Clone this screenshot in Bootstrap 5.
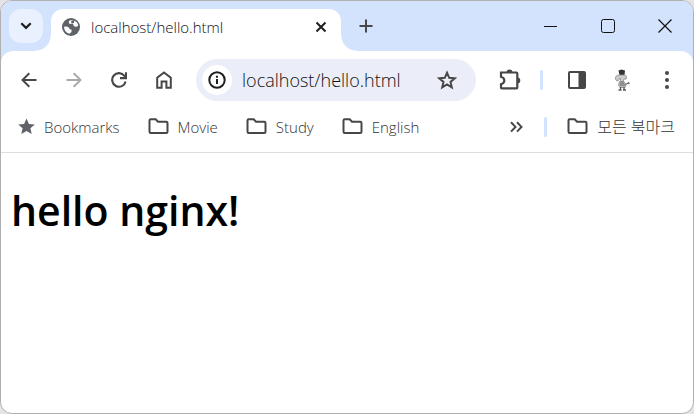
<!DOCTYPE html>
<html lang="ko">
<head>
<meta charset="utf-8">
<meta name="viewport" content="width=device-width, initial-scale=1">
<title>localhost/hello.html</title>
<link href="https://cdn.jsdelivr.net/npm/bootstrap@5.3.0/dist/css/bootstrap.min.css" rel="stylesheet">
<style>
body{background:#e4e4e4;font-family:"Open Sans","Noto Sans CJK KR",sans-serif;font-size:15px;font-weight:300;color:#111;line-height:20px}
svg{display:block;flex:none}
button{font-weight:inherit;color:#474747}
.window{border:1px solid #b0b0b0;border-radius:12px;overflow:hidden;background:#fff}
.strip{background:#d3e2fd;height:50px;padding-left:8px}
.tab-search{width:34px;height:34px;border-radius:12px;background:#e9f1fe;margin:8px 8px 0 0;color:#1f1f1f}
.page-tab{position:relative;width:290px;height:42px;margin-top:8px;padding:0 12px 6px 10px;background:#fff;border-radius:12px 12px 0 0}
.page-tab::before,.page-tab::after{content:"";position:absolute;bottom:0;width:15px;height:15px}
.page-tab::before{right:100%;background:radial-gradient(circle at 0 0,transparent 14px,#fff 15px)}
.page-tab::after{left:100%;background:radial-gradient(circle at 100% 0,transparent 14px,#fff 15px)}
.tab-title{margin-left:10px}
.tab-close{width:16px;height:20px;color:#1f1f1f}
.bare{border:0;background:none;padding:0;display:flex;flex:none;align-items:center;justify-content:center}
.bare.tab-search{background:#e9f1fe}
.bare.site-info{background:#fff}
.new-tab{width:50px;height:50px}
.win-btn{width:57px;height:50px;color:#111}
.chrome-wrap{background:#d3e2fd}
.toolbar{background:#fff;border-radius:12px 12px 0 0;padding:8px 4px 0 5px}
.tool{width:45px;height:42px}
.tool:disabled{color:#a9a9a9}
.address{min-width:0;height:42px;border-radius:21px;background:#ebeef8;margin:0 11px 0 10px;padding:0 7px 0 6px}
.site-info{width:30px;height:30px;border-radius:50%;color:#1f1f1f}
.url{min-width:0;width:0;border:0;background:none;padding:0;margin-left:10px;font-size:18px;font-weight:300;color:#111;outline:0}
.rule{width:3px;height:20px;border-radius:2px;background:#d3e2fd;flex:none}
.rule-tools{margin:0 11px 0 8px}
.rule-marks{margin:0 20px 0 21px}
.marks{height:52px;padding:0 18px 0 17px;border-bottom:1px solid #dedede}
.mark-list{gap:28px}
.marks a{color:#333;text-decoration:none;display:flex;align-items:center;gap:9px;white-space:nowrap}
.page{min-height:260px;padding:32px 10px}
.page h1{font-size:41px;line-height:50px;font-weight:600;color:#000;margin:0}
</style>
<script src="https://cdn.jsdelivr.net/npm/bootstrap@5.3.0/dist/js/bootstrap.bundle.min.js"></script>
</head>
<body>
<svg class="d-none" aria-hidden="true">
<symbol id="folder" viewBox="0 0 21 17"><path d="M1.500 13.500V2.500q0-1.200 1.200-1.200h5l2.300 2.400h8.300q1.200 0 1.200 1.200v8.800q0 1.300-1.200 1.300H2.700q-1.200 0-1.200-1.500z" fill="none" stroke="#474747" stroke-width="2"/></symbol>
</svg>
<div class="window min-vh-100 d-flex flex-column">
<header>
<div class="strip d-flex">
<button class="bare tab-search" aria-label="Search tabs"><svg width="12" height="8" viewBox="0 0 12 8" fill="none" stroke="currentColor" stroke-width="2.200"><path d="M1.300 1.200 6 5.900l4.700-4.700"/></svg></button>
<div class="page-tab d-flex align-items-center">
<svg width="20" height="20" viewBox="0 0 20 20"><circle cx="10" cy="10" r="9" fill="#5f6368"/><path d="M11.500 3q-4.500-.2-3.500 3.200l1 .8 3-.2.800 2.200q1.800 1.500 4.400 0Q17.200 4.500 11.500 3zM3 9.700q3.500-.5 5 1 .4 2 2.500 1.900v2.300l-2.200 1.800Q3.200 15.500 3 9.700z" fill="#fff"/><path d="m10.300 3.500 3.200-.2-.6 2.600-2.600.7z" fill="#5f6368"/></svg>
<span class="tab-title flex-grow-1">localhost/hello.html</span>
<button class="bare tab-close" aria-label="Close tab"><svg width="12" height="12" viewBox="0 0 12 12" stroke="currentColor" stroke-width="2"><path d="m1.500 1.500 9 9m0-9-9 9"/></svg></button>
</div>
<button class="bare new-tab" aria-label="New tab"><svg width="14" height="14" viewBox="0 0 14 14" stroke="currentColor" stroke-width="2"><path d="M7 .5v13M.5 7h13"/></svg></button>
<div class="d-flex ms-auto">
<button class="bare win-btn" aria-label="Minimize"><svg width="13" height="13" viewBox="0 0 13 13" stroke="currentColor"><path d="M0 6.500h13"/></svg></button>
<button class="bare win-btn" aria-label="Maximize"><svg width="14" height="14" viewBox="0 0 14 14" fill="none" stroke="currentColor"><rect x=".5" y=".5" width="13" height="13" rx="2"/></svg></button>
<button class="bare win-btn" aria-label="Close"><svg width="14" height="14" viewBox="0 0 14 14" stroke="currentColor" stroke-width="1.200"><path d="m.5.5 13 13m0-13-13 13"/></svg></button>
</div>
</div>
<div class="chrome-wrap"><div class="toolbar d-flex align-items-center">
<button class="bare tool" aria-label="Back"><svg width="16" height="16" viewBox="0 0 16 16" fill="none" stroke="currentColor" stroke-width="2"><path d="M15.500 8H2M8.300 1.200 1.500 8l6.800 6.800"/></svg></button>
<button class="bare tool" disabled aria-label="Forward"><svg width="16" height="16" viewBox="0 0 16 16" fill="none" stroke="currentColor" stroke-width="2"><path d="M.5 8H14M7.700 1.200 14.500 8l-6.800 6.800"/></svg></button>
<button class="bare tool" aria-label="Reload"><svg width="16" height="16" viewBox="0 0 16 16" fill="none" stroke="currentColor" stroke-width="2.100"><path d="M14.600 9.500A6.800 6.800 0 1 1 13.500 4l1 1.500M15 .2v5.900H9"/></svg></button>
<button class="bare tool" aria-label="Home"><svg width="16" height="18" viewBox="0 0 16 18" fill="none" stroke="currentColor" stroke-width="2"><path d="M1.200 16.800V6.700L8 1.400l6.800 5.300v10.100h-4.400v-6.300H5.600v6.300z"/></svg></button>
<div class="address d-flex align-items-center flex-grow-1">
<button class="bare site-info" aria-label="Site information"><svg width="18" height="18" viewBox="0 0 18 18" fill="none" stroke="currentColor" stroke-width="2"><circle cx="9" cy="9" r="7.700"/><path d="M9 8v5M9 4.800v2"/></svg></button>
<input class="url flex-grow-1" type="text" value="localhost/hello.html" aria-label="Address">
<button class="bare tool" aria-label="Bookmark this page"><svg width="20" height="20" viewBox="0 0 20 20" fill="none" stroke="currentColor" stroke-width="2"><path d="m10 2.700 2.200 5.100 5.500.5-4.200 3.600 1.300 5.400-4.800-2.900-4.800 2.900 1.300-5.400-4.200-3.600 5.500-.5z"/></svg></button>
</div>
<button class="bare tool" aria-label="Extensions"><svg width="22" height="22" viewBox="0 0 22 22"><path d="M2 3.500h15.500q.8 0 .8.800v14.200q0 .8-.8.800H2.800q-.8 0-.8-.8v-3.300q3.300-.8 3.300-3.700T2 7.800z" fill="none" stroke="currentColor" stroke-width="2.200"/><path d="M7.500 3.500a3 3 0 0 1 6 0zM18.300 8.500a3 3 0 0 1 0 6z" fill="currentColor"/></svg></button>
<span class="rule rule-tools"></span>
<button class="bare tool" aria-label="Side panel"><svg width="18" height="18" viewBox="0 0 18 18"><rect x="1" y="1" width="16" height="16" rx="1" fill="none" stroke="currentColor" stroke-width="2"/><path d="M10.500 1H17v16h-6.500z" fill="currentColor"/></svg></button>
<button class="bare tool" aria-label="Profile"><svg width="16" height="22" viewBox="0 0 16 22" fill="none" stroke="#8a8a8a" stroke-width=".8"><path d="m4.500 1.500 3-1 3.500 1-.5 4.500h-5z" fill="#333" stroke="none"/><path d="M5.500 6Q1 6 1.500 10q.8 3 3 1.500L6 9l1 4h2l1-3q3 1 2.500-2Q12 6 10.500 6z" fill="#ccc"/><path d="M5.500 12.500 4.500 16l1.500 2.500h5l1-3-2-3z" fill="#bbb"/><path d="m11.500 15.500 3-1.500m0-1 .7 2M6 14h4m-4 2h5" stroke="#666" stroke-width="1.200"/><path d="M6.500 18v2.500m3.500-2.500v2.500M4.500 21h3m1.500 0h3" stroke="#555" stroke-width="1.300"/></svg></button>
<button class="bare tool" aria-label="Menu"><svg width="4" height="18" viewBox="0 0 4 18" fill="currentColor"><circle cx="2" cy="2" r="2"/><circle cx="2" cy="9" r="2"/><circle cx="2" cy="16" r="2"/></svg></button>
</div></div>
<nav class="marks d-flex align-items-center bg-white" aria-label="Bookmarks">
<div class="mark-list d-flex">
<a href="#"><svg width="17" height="17" viewBox="0 0 17 17"><path d="m8.500.5 2.400 5.400 5.900.5-4.400 3.900 1.300 5.800-5.200-3.100-5.200 3.100 1.300-5.800L.2 6.400l5.900-.5z" fill="#5f6368"/></svg>Bookmarks</a>
<a href="#"><svg width="21" height="17"><use href="#folder"/></svg>Movie</a>
<a href="#"><svg width="21" height="17"><use href="#folder"/></svg>Study</a>
<a href="#"><svg width="21" height="17"><use href="#folder"/></svg>English</a>
</div>
<button class="bare ms-auto" aria-label="More bookmarks"><svg width="13" height="12" viewBox="0 0 13 12" fill="none" stroke="currentColor" stroke-width="2"><path d="m1 1.200 4.500 4.700L1 10.600m6-9.400 4.500 4.700L7 10.600"/></svg></button>
<span class="rule rule-marks"></span>
<a href="#"><svg width="21" height="17"><use href="#folder"/></svg><span class="fs-6">모든 북마크</span></a>
</nav>
</header>
<main class="page flex-grow-1"><h1>hello nginx!</h1></main>
</div>
</body>
</html>
